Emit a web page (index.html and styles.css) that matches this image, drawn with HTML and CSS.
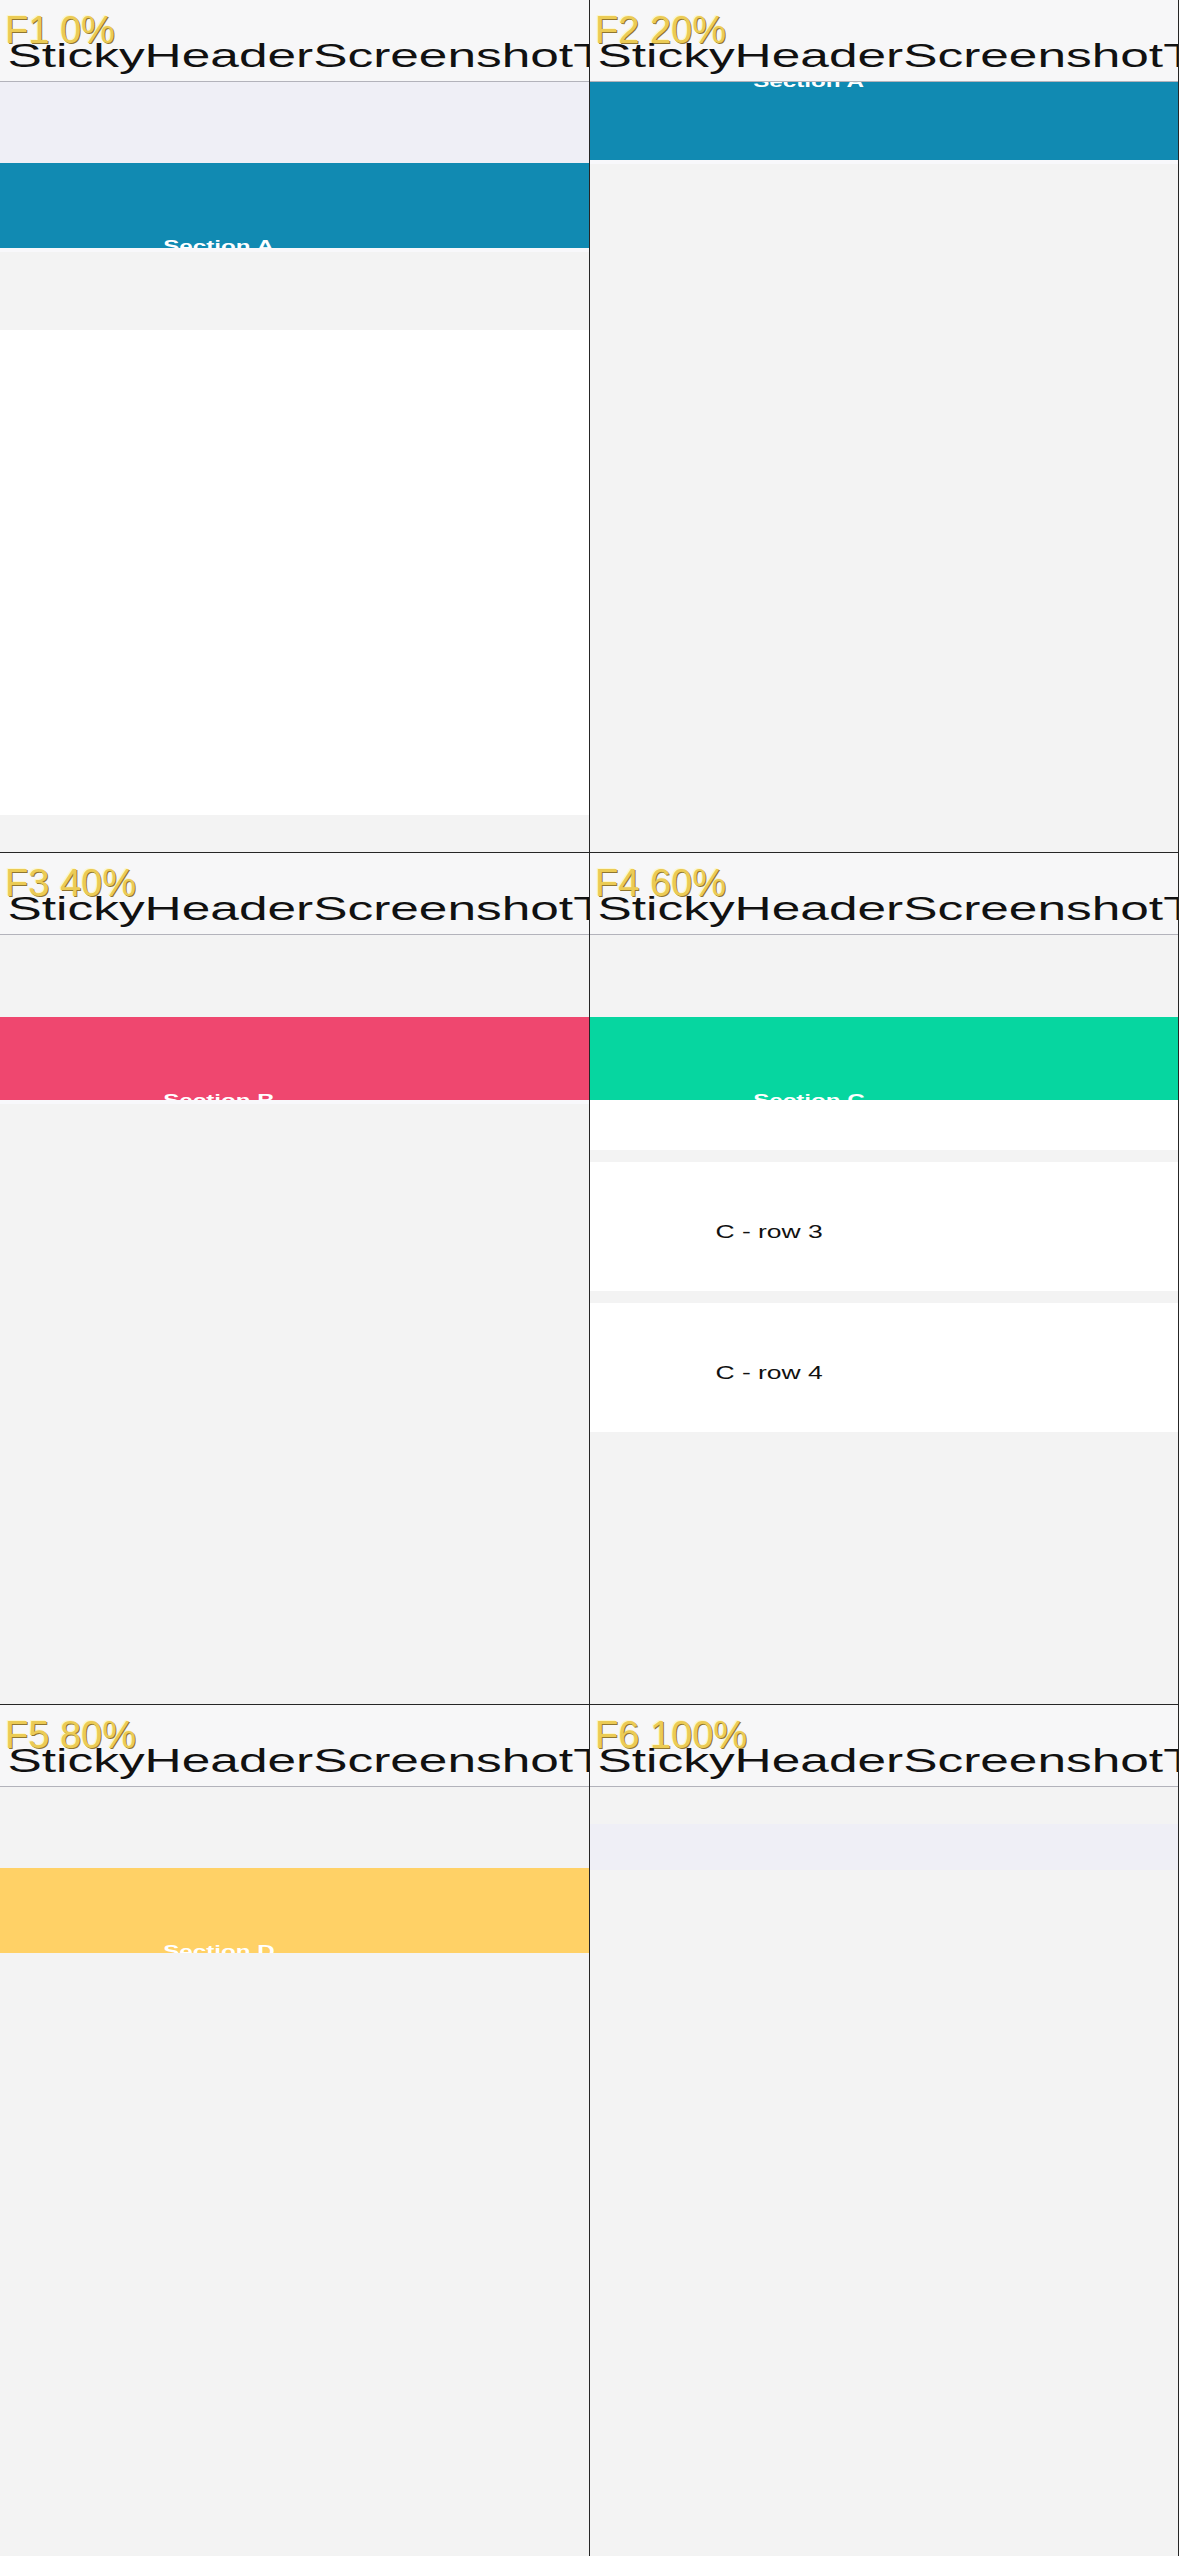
FILE: index.html
```html
<!DOCTYPE html>
<html lang="en">
<head>
    <meta charset="UTF-8">
    <meta name="viewport" content="width=device-width, initial-scale=1.0">
    <title>StickyHeaderScreenshotTest</title>
    <link rel="stylesheet" href="styles.css">
</head>
<body>
    <div class="sheet">

        <!-- F1 -->
        <section class="cell">
            <div class="screen">
                <header class="bar"><h1 class="bar-title">StickyHeaderScreenshotTest</h1></header>
                <div class="big-title h81"></div>
                <div class="band band-a h85"><span class="band-label">Section A</span></div>
                <div class="gap seam h82"></div>
                <div class="card h485"></div>
            </div>
            <div class="tag">F1 0%</div>
        </section>

        <!-- F2 -->
        <section class="cell">
            <div class="screen">
                <header class="bar"><h1 class="bar-title">StickyHeaderScreenshotTest</h1></header>
                <div class="band band-a h78"><span class="band-label lifted">Section A</span></div>
                <div class="gap seam"></div>
            </div>
            <div class="tag">F2 20%</div>
        </section>

        <!-- F3 -->
        <section class="cell">
            <div class="screen">
                <header class="bar"><h1 class="bar-title">StickyHeaderScreenshotTest</h1></header>
                <div class="gap h82"></div>
                <div class="band band-b h83"><span class="band-label">Section B</span></div>
                <div class="gap seam"></div>
            </div>
            <div class="tag">F3 40%</div>
        </section>

        <!-- F4 -->
        <section class="cell">
            <div class="screen">
                <header class="bar"><h1 class="bar-title">StickyHeaderScreenshotTest</h1></header>
                <div class="gap h82"></div>
                <div class="band band-c h83"><span class="band-label">Section C</span></div>
                <div class="rows">
                    <div class="row row-tail"></div>
                    <div class="row">C - row 3</div>
                    <div class="row">C - row 4</div>
                </div>
            </div>
            <div class="tag">F4 60%</div>
        </section>

        <!-- F5 -->
        <section class="cell">
            <div class="screen">
                <header class="bar"><h1 class="bar-title">StickyHeaderScreenshotTest</h1></header>
                <div class="gap h81"></div>
                <div class="band band-d h85"><span class="band-label">Section D</span></div>
                <div class="gap"></div>
            </div>
            <div class="tag">F5 80%</div>
        </section>

        <!-- F6 -->
        <section class="cell">
            <div class="screen">
                <header class="bar"><h1 class="bar-title">StickyHeaderScreenshotTest</h1></header>
                <div class="gap h37"></div>
                <div class="big-title h46"></div>
                <div class="gap"></div>
            </div>
            <div class="tag">F6 100%</div>
        </section>

    </div>
</body>
</html>
```

FILE: styles.css
```css
/* page */
body {
    margin: 0;
    background-color: #f3f3f3;
    font-family: "Liberation Sans", Arial, sans-serif;
    color: #111;
}

/* 2 x 3 grid of frames */
.sheet {
    display: grid;
    grid-template-columns: 590px 589px;
    grid-template-rows: 853px 852px 851px;
}

.cell {
    position: relative;
    overflow: hidden;
    box-sizing: border-box;
    border-right: 1px solid #262626;
    border-bottom: 1px solid #262626;
    background-color: #f3f3f3;
}

.cell:nth-child(n+5) {
    border-bottom: none;
}

/* phone screen, 390pt wide, stretched to the frame width */
.screen {
    width: 390px;
    height: 100%;
    display: flex;
    flex-direction: column;
    transform: scaleX(1.5115);
    transform-origin: 0 0;
    background-color: #f3f3f3;
}

/* navigation bar */
.bar {
    flex: none;
    height: 82px;
    box-sizing: border-box;
    padding: 35px 0 0 5px;
    background-color: #f7f7f8;
    border-bottom: 1px solid #b3b3bb;
    white-space: nowrap;
}

.bar-title {
    margin: 0;
    font-size: 34px;
    font-weight: normal;
    line-height: 40px;
    color: #111;
}

/* filler blocks */
.gap {
    flex: none;
    box-sizing: border-box;
    background-color: #f3f3f3;
}

.big-title {
    flex: none;
    background-color: #efeff6;
}

.card {
    flex: none;
    background-color: #fff;
}

.seam {
    border-top: 4px solid #f8f8fb;
}

.h37 { height: 37px; }
.h46 { height: 46px; }
.h78 { height: 78px; }
.h81 { height: 81px; }
.h82 { height: 82px; }
.h83 { height: 83px; }
.h85 { height: 85px; }
.h485 { height: 485px; }

/* section headers */
.band {
    flex: none;
    overflow: hidden;
    box-sizing: border-box;
    padding: 76px 0 0 108px;
}

.band-a { background-color: #118ab2; }
.band-b { background-color: #ef476f; }
.band-c { background-color: #06d6a0; }
.band-d { background-color: #ffd166; }

.band-label {
    display: block;
    font-size: 16px;
    font-weight: bold;
    line-height: 16px;
    color: #fff;
    white-space: nowrap;
}

.band-label.lifted {
    margin-top: -84px;
}

/* list rows */
.rows {
    display: flex;
    flex-direction: column;
    gap: 12px;
}

.row {
    height: 129px;
    box-sizing: border-box;
    padding: 60px 0 0 83px;
    background-color: #fff;
    font-size: 17.5px;
    line-height: 20px;
    color: #111;
}

.row-tail {
    height: 50px;
    padding: 0;
}

/* frame caption */
.tag {
    position: absolute;
    top: 11px;
    left: 5px;
    font-size: 38px;
    line-height: 38px;
    color: #ebcb55;
    text-shadow: 1px 1px 0 rgba(125, 95, 10, 0.85), -1px -1px 0 rgba(255, 246, 190, 0.7);
    white-space: nowrap;
}
```
